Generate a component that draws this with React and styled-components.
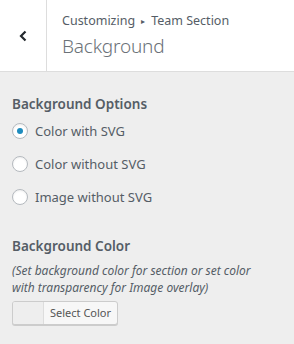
import React, { useState } from 'react';
import styled, { createGlobalStyle } from 'styled-components';

const Global = createGlobalStyle`
    html, body {
        margin: 0;
        padding: 0;
        background: #eeeeee;
    }
    body {
        font-family: "Noto Sans", "Open Sans", sans-serif;
        color: #555d66;
    }
`;

const Panel = styled.div`
    width: 294px;
    height: 344px;
    background: #eeeeee;
    overflow: hidden;
`;

const Header = styled.div`
    display: flex;
    height: 71px;
    background: #fff;
    border-bottom: 1px solid #dddddd;
`;

const BackButton = styled.button`
    width: 47px;
    flex: none;
    border: none;
    border-right: 1px solid #dddddd;
    background: #fff;
    padding: 0;
    display: flex;
    align-items: center;
    justify-content: center;
    color: #23282d;
    cursor: pointer;
`;

const TitleBlock = styled.div`
    padding: 12px 0 0 15px;
    display: flex;
    flex-direction: column;
`;

const Crumb = styled.span`
    font-size: 12.5px;
    line-height: 18px;
    color: #555d66;
`;

const Arrow = styled.span`
    font-size: 8px;
    margin: 0 6px;
    vertical-align: 1px;
`;

const PageTitle = styled.h1`
    margin: 3px 0 0;
    font-size: 19px;
    font-weight: 300;
    line-height: 26px;
    color: #6b7278;
    letter-spacing: -0.2px;
`;

const Body = styled.div`
    padding: 22px 12px 0;
`;

const Section = styled.div`
    margin-bottom: ${p => p.gap || 0}px;
`;

const Heading = styled.div`
    font-size: 13.5px;
    font-weight: 600;
    line-height: 20px;
    color: #555d66;
`;

const Options = styled.div`
    display: flex;
    flex-direction: column;
    gap: 13px;
    margin-top: 7px;
`;

const Option = styled.label`
    display: flex;
    align-items: center;
    gap: 7px;
    font-size: 13px;
    line-height: 20px;
    color: #555d66;
    cursor: pointer;
`;

const Radio = styled.span`
    width: 14px;
    height: 14px;
    border-radius: 50%;
    border: 1px solid #b4b9be;
    background: #fff;
    box-shadow: inset 0 1px 2px rgba(0,0,0,0.07);
    display: flex;
    align-items: center;
    justify-content: center;

    &::after {
        content: "";
        width: 6px;
        height: 6px;
        border-radius: 50%;
        background: ${p => (p.checked ? '#1e8cbe' : 'transparent')};
    }
`;

const Description = styled.div`
    margin-top: 6px;
    max-width: 252px;
    font-size: 12px;
    font-style: italic;
    line-height: 17px;
    color: #555d66;
`;

const ColorButton = styled.button`
    margin-top: 5px;
    display: flex;
    height: 24px;
    padding: 0;
    border: 1px solid #cccccc;
    border-radius: 3px;
    background: #f7f7f7;
    box-shadow: 0 1px 0 #cccccc;
    overflow: hidden;
    cursor: pointer;
    font-family: inherit;
`;

const Swatch = styled.span`
    width: 30px;
    height: 100%;
    background: #eeeeee;
    border-right: 1px solid #dddddd;
`;

const ButtonText = styled.span`
    padding: 0 6px;
    font-size: 11px;
    line-height: 22px;
    color: #555;
`;

const options = ['Color with SVG', 'Color without SVG', 'Image without SVG'];

export default function App() {
    const [selected, setSelected] = useState(0);

    return (
        <Panel>
            <Global />
            <Header>
                <BackButton aria-label="Back">
                    <svg width="10" height="12" viewBox="0 0 10 12">
                        <path d="M7.5 1.5 L3 6 L7.5 10.5" fill="none" stroke="#23282d" strokeWidth="2.2" />
                    </svg>
                </BackButton>
                <TitleBlock>
                    <Crumb>Customizing<Arrow>▸</Arrow>Team Section</Crumb>
                    <PageTitle>Background</PageTitle>
                </TitleBlock>
            </Header>
            <Body>
                <Section gap={29}>
                    <Heading>Background Options</Heading>
                    <Options>
                        {options.map((o, i) => (
                            <Option key={o} onClick={() => setSelected(i)}>
                                <Radio checked={selected === i} />
                                {o}
                            </Option>
                        ))}
                    </Options>
                </Section>
                <Section>
                    <Heading>Background Color</Heading>
                    <Description>
                        (Set background color for section or set color with transparency for Image overlay)
                    </Description>
                    <ColorButton>
                        <Swatch />
                        <ButtonText>Select Color</ButtonText>
                    </ColorButton>
                </Section>
            </Body>
        </Panel>
    );
}
